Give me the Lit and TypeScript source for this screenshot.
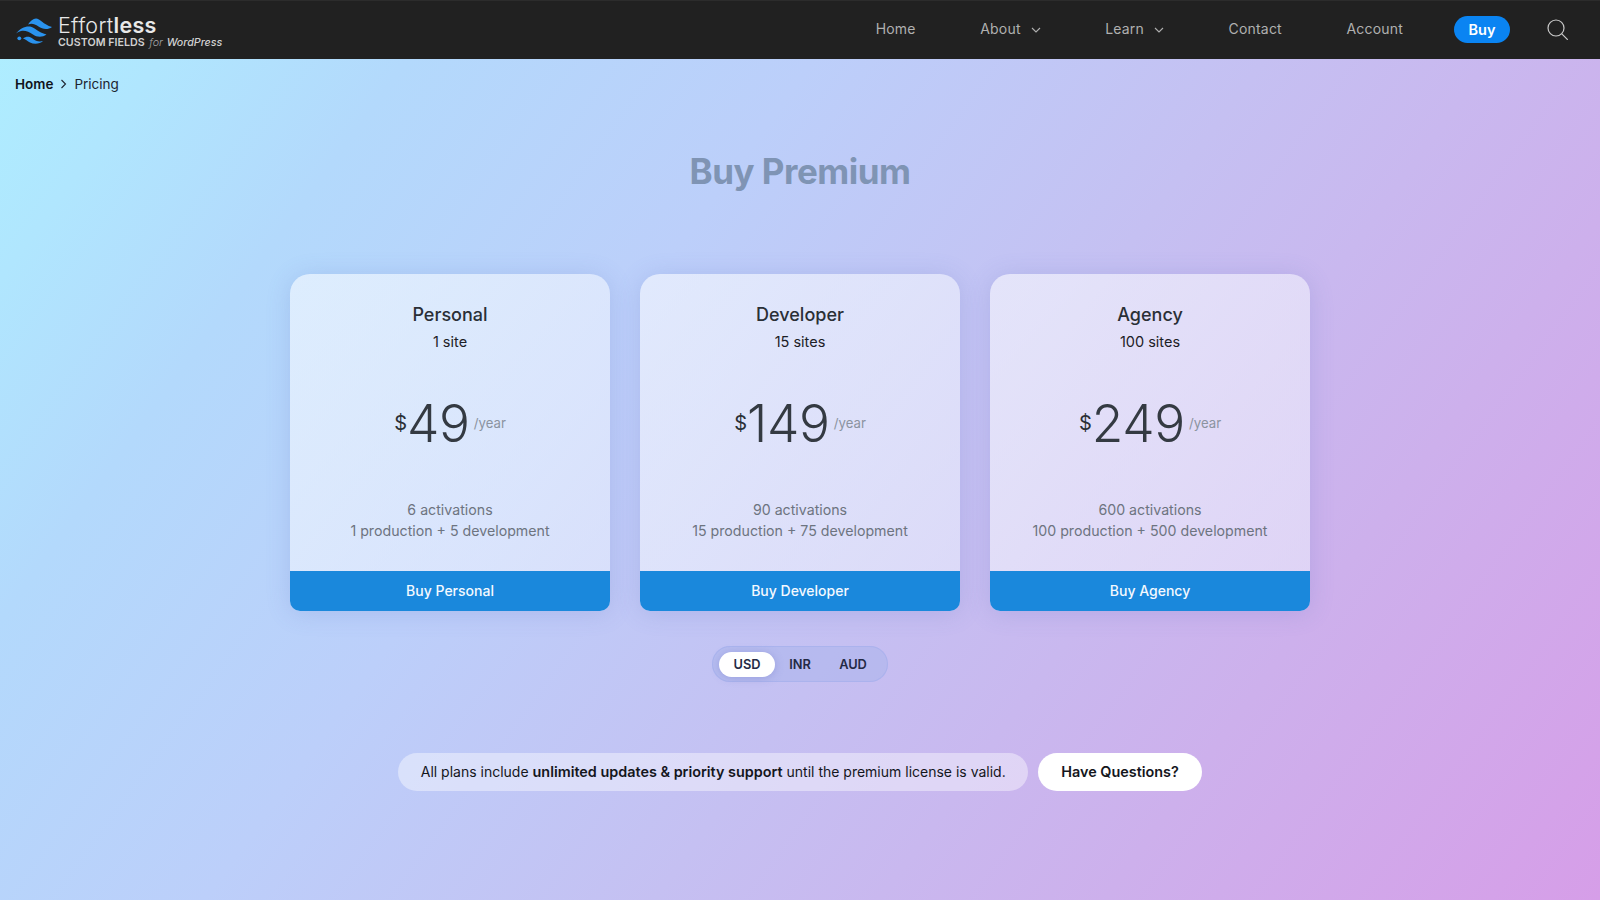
import { LitElement, html, css, svg } from "lit";
import { customElement, state } from "lit/decorators.js";

interface Plan
{
    name: string;
    sites: string;
    price: string;
    activations: string;
    split: string;
}

const PLANS: Plan[] = [
    { name: "Personal", sites: "1 site", price: "49", activations: "6 activations", split: "1 production + 5 development" },
    { name: "Developer", sites: "15 sites", price: "149", activations: "90 activations", split: "15 production + 75 development" },
    { name: "Agency", sites: "100 sites", price: "249", activations: "600 activations", split: "100 production + 500 development" },
];

const chevron = svg`<svg class="chev" width="10" height="6" viewBox="0 0 10 6" fill="none" stroke="currentColor" stroke-width="1.1"><path d="M1 1l4 4 4-4"/></svg>`;

@customElement("app-root")
export class AppRoot extends LitElement
{
    static styles = css`
        :host {
            display: block;
            min-height: 100vh;
            font-family: Inter, "Liberation Sans", sans-serif;
            background: linear-gradient(126deg, #aeefff 0%, #b0e6fe 9%, #b3d9fc 20%, #bccffa 38%, #c5c0f2 58%, #cdb0ec 78%, #d69ee8 100%);
        }
        header {
            display: flex;
            align-items: center;
            height: 59px;
            box-sizing: border-box;
            padding: 0 32px 0 15px;
            background: #212121;
            box-shadow: inset 0 1px 0 #2c2c2c;
        }
        .logo {
            display: flex;
            align-items: center;
            gap: 6px;
            margin-top: 3px;
        }
        .wordmark {
            display: flex;
            flex-direction: column;
            color: #e8e8e8;
        }
        .brand {
            font-size: 21.5px;
            line-height: 22px;
            font-weight: 300;
            letter-spacing: 0.3px;
        }
        .brand b {
            font-weight: 600;
        }
        .tag {
            font-size: 10.7px;
            line-height: 13px;
            font-weight: 600;
            color: #d0d0d0;
        }
        .tag i {
            font-weight: 500;
        }
        .tag i.for {
            font-weight: 300;
            color: #a5a5a5;
            margin: 0 1px 0 2px;
        }
        nav {
            margin-left: auto;
            display: flex;
            align-items: center;
            font-size: 14px;
            letter-spacing: 0.2px;
            color: #b0b0b0;
        }
        nav a {
            display: flex;
            align-items: center;
            gap: 10px;
            margin: -2px 64.5px 0 0;
        }
        nav a.last {
            margin-right: 51px;
        }
        .chev {
            margin-top: 2px;
        }
        .buy {
            background: #0a84f2;
            color: #fff;
            font-weight: 600;
            font-size: 14.5px;
            letter-spacing: 0;
            height: 27px;
            width: 56px;
            border-radius: 14px;
            display: flex;
            align-items: center;
            justify-content: center;
            margin-right: 37px;
        }
        .crumbs {
            display: flex;
            align-items: center;
            gap: 7px;
            padding: 15px 15px 0;
            font-size: 13.5px;
            line-height: 20px;
            color: #1c2430;
        }
        .crumbs b {
            font-weight: 600;
            color: #10141c;
        }
        h1 {
            margin: 55px 0 0;
            text-align: center;
            font-size: 35px;
            line-height: 44px;
            font-weight: 700;
            letter-spacing: -0.5px;
            color: #7f94b4;
        }
        .cards {
            display: flex;
            justify-content: center;
            gap: 30px;
            margin-top: 81px;
        }
        .card {
            width: 320px;
            height: 337px;
            display: flex;
            flex-direction: column;
            align-items: center;
            border-radius: 20px 20px 10px 10px;
            overflow: hidden;
            background: linear-gradient(135deg, rgba(255, 255, 255, 0.55), rgba(240, 245, 255, 0.5));
            box-shadow: 0 2px 24px rgba(90, 110, 190, 0.2);
            color: #2a2f36;
        }
        .name {
            margin-top: 29px;
            font-size: 18px;
            line-height: 24px;
            font-weight: 500;
        }
        .sites {
            margin-top: 5px;
            font-size: 14.5px;
            line-height: 20px;
            color: #1c2026;
        }
        .price {
            margin-top: 41px;
            display: flex;
            align-items: center;
            height: 60px;
        }
        .cur {
            font-size: 20px;
            font-weight: 400;
        }
        .amount {
            font-size: 51.5px;
            font-weight: 260;
            line-height: 60px;
            color: #343a42;
            letter-spacing: -0.3px;
        }
        .per {
            font-size: 13.2px;
            color: #8b93a0;
            margin-left: 4px;
        }
        .details {
            margin-top: 46px;
            text-align: center;
            font-size: 14.2px;
            line-height: 21px;
            color: #6d7480;
        }
        .cta {
            margin-top: auto;
            align-self: stretch;
            height: 40px;
            box-sizing: border-box;
            padding-bottom: 1px;
            display: flex;
            align-items: center;
            justify-content: center;
            background: #1a88dc;
            color: #f4f9ff;
            font-size: 14px;
            font-weight: 500;
        }
        .currency {
            display: flex;
            justify-content: center;
            margin-top: 35px;
        }
        .switch {
            display: flex;
            align-items: center;
            width: 176px;
            height: 36px;
            box-sizing: border-box;
            padding: 0 7px;
            border-radius: 18px;
            background: rgba(160, 175, 235, 0.38);
            box-shadow: inset 0 0 0 1px rgba(150, 165, 235, 0.35);
            font-size: 12.8px;
            font-weight: 600;
            color: #242a45;
        }
        .switch span {
            height: 25px;
            display: flex;
            align-items: center;
            justify-content: center;
            border-radius: 13px;
            cursor: pointer;
        }
        .switch span:nth-child(1) { width: 56px; }
        .switch span:nth-child(2) { width: 50px; }
        .switch span:nth-child(3) { width: 56px; }
        .switch span.on {
            background: #fff;
            box-shadow: 0 1px 8px rgba(100, 110, 190, 0.35);
        }
        .note {
            display: flex;
            justify-content: center;
            gap: 10px;
            margin-top: 71px;
            font-size: 14px;
            color: #14161c;
        }
        .info {
            height: 38px;
            line-height: 38px;
            padding: 0 22.5px;
            border-radius: 19px;
            background: rgba(255, 255, 255, 0.42);
        }
        .info b {
            font-weight: 600;
            font-size: 14.4px;
        }
        .ask {
            display: flex;
            align-items: center;
            height: 38px;
            padding: 0 23px 1px;
            box-sizing: border-box;
            border-radius: 19px;
            background: #fff;
            font-size: 14.4px;
            font-weight: 600;
        }
    `;

    @state()
    currency = "USD";

    renderLogo()
    {
        return html`<svg width="37" height="26" viewBox="0 0 37 26" fill="#2a93ee">
            <path d="M13 6.500C15.500 3 18 .5 21 .5c4 0 7 6 16 8.500-4 3-9.500 2.500-13.500-.5-4-2.800-7-3.500-10.500-2z"/>
            <path d="M1 15.500C5 10.500 10 8 15 8.500c4.500.5 8 6 16.500 8-4 3-9.500 3-13.500 0-4-3-8.500-4.500-12-3.500-2 .6-3.500 1.500-5 2.500z"/>
            <path d="M8 20.500c3-2.500 6.500-2.500 9.500 0 3 2.500 6.500 3.500 10.500 2.500-3 3-9 3.500-13 1.500-2.500-1.200-4.500-3.500-7-4z"/>
            <circle cx="4.300" cy="20.300" r="1.900"/>
        </svg>`;
    }

    renderCard(plan: Plan)
    {
        return html`<div class="card">
            <div class="name">${plan.name}</div>
            <div class="sites">${plan.sites}</div>
            <div class="price">
                <span class="cur">$</span><span class="amount">${plan.price}</span><span class="per">/year</span>
            </div>
            <div class="details">${plan.activations}<br />${plan.split}</div>
            <div class="cta">Buy ${plan.name}</div>
        </div>`;
    }

    render()
    {
        return html`
            <header>
                <div class="logo">
                    ${this.renderLogo()}
                    <div class="wordmark">
                        <div class="brand">Effort<b>less</b></div>
                        <div class="tag">CUSTOM FIELDS <i class="for">for</i> <i>WordPress</i></div>
                    </div>
                </div>
                <nav>
                    <a>Home</a>
                    <a>About ${chevron}</a>
                    <a>Learn ${chevron}</a>
                    <a>Contact</a>
                    <a class="last">Account</a>
                    <div class="buy">Buy</div>
                    <svg width="21" height="21" viewBox="0 0 21 21" fill="none" stroke="#c9c9c9" stroke-width="1.2">
                        <circle cx="9" cy="9" r="8"/>
                        <path d="M14.800 14.800l6 6"/>
                    </svg>
                </nav>
            </header>
            <div class="crumbs">
                <b>Home</b>
                <svg width="7" height="10" viewBox="0 0 7 10" fill="none" stroke="currentColor" stroke-width="1.1"><path d="M1.500 1l4 4-4 4"/></svg>
                <span>Pricing</span>
            </div>
            <h1>Buy Premium</h1>
            <div class="cards">${PLANS.map((p) => this.renderCard(p))}</div>
            <div class="currency">
                <div class="switch">
                    ${["USD", "INR", "AUD"].map((c) => html`<span class=${c === this.currency ? "on" : ""} @click=${() => (this.currency = c)}>${c}</span>`)}
                </div>
            </div>
            <div class="note">
                <div class="info">All plans include <b>unlimited updates &amp; priority support</b> until the premium license is valid.</div>
                <div class="ask">Have Questions?</div>
            </div>
        `;
    }
}
